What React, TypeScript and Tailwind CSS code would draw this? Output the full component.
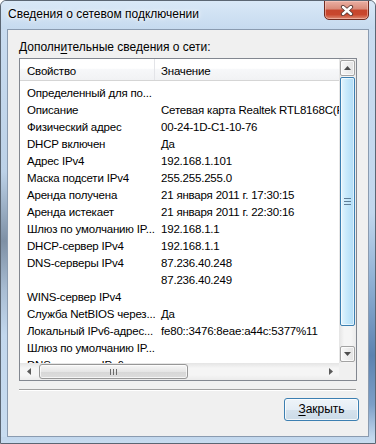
import React from "react";

const rows: [string, string][] = [
  ["Определенный для по...", ""],
  ["Описание", "Сетевая карта Realtek RTL8168C(P)/8111C(P) Family PCI-E Gigabit Ethernet NIC"],
  ["Физический адрес", "00-24-1D-C1-10-76"],
  ["DHCP включен", "Да"],
  ["Адрес IPv4", "192.168.1.101"],
  ["Маска подсети IPv4", "255.255.255.0"],
  ["Аренда получена", "21 января 2011 г. 17:30:15"],
  ["Аренда истекает", "21 января 2011 г. 22:30:16"],
  ["Шлюз по умолчанию IP...", "192.168.1.1"],
  ["DHCP-сервер IPv4", "192.168.1.1"],
  ["DNS-серверы IPv4", "87.236.40.248"],
  ["", "87.236.40.249"],
  ["WINS-сервер IPv4", ""],
  ["Служба NetBIOS через...", "Да"],
  ["Локальный IPv6-адрес...", "fe80::3476:8eae:a44c:5377%11"],
  ["Шлюз по умолчанию IP...", ""],
  ["DNS-серверы IPv6", ""],
];

function Arrow({ dir, color = "#4d4d4d" }: { dir: "up" | "down" | "left" | "right"; color?: string }) {
  const vertical = dir === "up" || dir === "down";
  const pts = {
    up: "0,4 7,4 3.5,0",
    down: "0,0 7,0 3.5,4",
    left: "4,0 4,7 0,3.5",
    right: "0,0 0,7 4,3.5",
  }[dir];
  return (
    <svg width={vertical ? 7 : 4} height={vertical ? 4 : 7} viewBox={vertical ? "0 0 7 4" : "0 0 4 7"}>
      <polygon points={pts} fill={color} />
    </svg>
  );
}

function CloseGlyph() {
  return (
    <svg width="14" height="11" viewBox="0 0 14 11">
      <path d="M3 2 L11 9 M11 2 L3 9" stroke="#5a3a36" strokeWidth="4.2" strokeLinecap="round" />
      <path d="M3 2 L11 9 M11 2 L3 9" stroke="#ffffff" strokeWidth="2.4" strokeLinecap="round" />
    </svg>
  );
}

function VScrollBar() {
  return (
    <div className="w-[17px] shrink-0 flex flex-col bg-[linear-gradient(to_right,#e4e4e4,#f5f5f5_30%,#f5f5f5_70%,#ebebeb)]">
      <div className="mx-px mt-px h-[16px] rounded-[2px] border border-[#a3a3a3] bg-[linear-gradient(to_right,#f8f8f8,#e2e2e2)] shadow-[inset_0_0_0_1px_rgba(255,255,255,0.7)] flex items-center justify-center">
        <Arrow dir="up" />
      </div>
      <div className="mx-px mt-px h-[249px] rounded-[2px] border border-[#3c7fb1] bg-[linear-gradient(to_right,#e5f5fd,#c9eafc_40%,#b0dcf6)] shadow-[inset_0_0_0_1px_rgba(255,255,255,0.6)] flex flex-col items-center justify-center gap-[2px]">
        <span className="block w-[7px] h-px bg-[#5f7e97]" />
        <span className="block w-[7px] h-px bg-[#5f7e97]" />
        <span className="block w-[7px] h-px bg-[#5f7e97]" />
      </div>
      <div className="flex-1" />
      <div className="mx-px mb-px h-[16px] rounded-[2px] border border-[#a3a3a3] bg-[linear-gradient(to_right,#f8f8f8,#e2e2e2)] shadow-[inset_0_0_0_1px_rgba(255,255,255,0.7)] flex items-center justify-center">
        <Arrow dir="down" />
      </div>
    </div>
  );
}

function HScrollBar() {
  return (
    <div className="flex-1 min-w-0 flex bg-[linear-gradient(to_bottom,#e4e4e4,#f5f5f5_30%,#f5f5f5_70%,#ebebeb)]">
      <div className="w-[17px] flex items-center justify-center">
        <Arrow dir="left" color="#5a5a5a" />
      </div>
      <div className="ml-[2px] my-px w-[149px] rounded-[3px] border border-[#979797] bg-[linear-gradient(to_bottom,#f6f6f6,#e6e6e6_50%,#d7d7d7_51%,#dcdcdc)] shadow-[inset_0_0_0_1px_rgba(255,255,255,0.7)] flex items-center justify-center gap-[2px]">
        <span className="block w-px h-[6px] bg-[#6a6a6a]" />
        <span className="block w-px h-[6px] bg-[#6a6a6a]" />
        <span className="block w-px h-[6px] bg-[#6a6a6a]" />
      </div>
      <div className="flex-1" />
      <div className="w-[17px] flex items-center justify-center">
        <Arrow dir="right" color="#5a5a5a" />
      </div>
    </div>
  );
}

function NetworkDetails() {
  return (
    <div className="mx-[11px] mt-[3px] h-[323px] shrink-0 border border-[#828790] bg-white flex flex-col">
      <div className="h-[304px] flex">
        <div className="flex-1 min-w-0 overflow-hidden text-[11.5px] tracking-[-0.2px]">
          <div className="h-[22px] flex border-b border-[#d5d5d5] bg-[linear-gradient(to_bottom,#ffffff,#ffffff_45%,#f7f8fa_46%,#f1f2f4)]">
            <div className="w-[135px] shrink-0 pl-[7px] pt-[5px] leading-[15px] border-r border-[#e3e4e8]">Свойство</div>
            <div className="pl-[6px] pt-[5px] leading-[15px] whitespace-nowrap">Значение</div>
          </div>
          <div className="pt-[4px]">
            {rows.map(([name, value], i) => (
              <div key={i} className="h-[17px] flex leading-[17px] whitespace-nowrap">
                <div className="w-[135px] shrink-0 pl-[7px] overflow-hidden">{name}</div>
                <div className="pl-[6px]">{value}</div>
              </div>
            ))}
          </div>
        </div>
        <VScrollBar />
      </div>
      <div className="h-[17px] flex">
        <HScrollBar />
        <div className="w-[17px] shrink-0 bg-[#f0f0f0]" />
      </div>
    </div>
  );
}

export default function App() {
  return (
    <div className="w-[376px] h-[444px] flex flex-col rounded-t-[6px] border border-[#5b6673] bg-[#c4d8ee] shadow-[inset_0_0_0_1px_rgba(255,255,255,0.55)] text-[12px] text-black font-['Liberation_Sans',Arial,sans-serif] overflow-hidden">
      <div className="h-[28px] shrink-0 flex items-start justify-between rounded-t-[5px] bg-[linear-gradient(to_bottom,#d9e8f7,#c6daef)]">
        <div className="pl-[7px] pt-[6px] leading-[15px] [text-shadow:0_0_6px_#fff,0_0_3px_#fff]">
          Сведения о сетевом подключении
        </div>
        <div className="-mt-px mr-[6px] w-[45px] h-[20px] rounded-b-[5px] border border-[#6f2b20] bg-[linear-gradient(to_bottom,#eab0a4,#d98a78_45%,#c6452d_50%,#c9472e_75%,#dd8a73)] shadow-[inset_0_0_0_1px_rgba(255,210,200,0.5)] flex items-center justify-center">
          <CloseGlyph />
        </div>
      </div>
      <div className="flex-1 min-h-0 flex">
        <div className="w-[6px] shrink-0 bg-[linear-gradient(to_bottom,#c9dcf0,#bcd1e7_35%,#7e90a5_52%,#a9bdd3_64%,#c2d7ed_75%,#c8dcf0)]" />
        <div className="flex-1 min-w-0 flex flex-col border border-[#8a9bb0] bg-[#f0f0f0]">
          <div className="pl-[11px] pt-[10px] leading-[15px]">
            Дополн<span className="underline underline-offset-[2px]">и</span>тельные сведения о сети:
          </div>
          <NetworkDetails />
          <div className="ml-[11px] mr-[12px] mt-[8px] h-[2px] shrink-0 border-t border-[#a0a0a0] border-b border-b-white" />
          <div className="mt-[7px] mr-[9px] flex justify-end">
            <button className="w-[75px] h-[23px] rounded-[3px] border border-[#3c7fb1] bg-[linear-gradient(to_bottom,#eef4f9,#e4edf5_50%,#d5e2ed_51%,#cbdbe8)] shadow-[inset_0_0_0_1px_rgba(255,255,255,0.75)] leading-[15px]">
              <span className="underline underline-offset-[2px]">З</span>акрыть
            </button>
          </div>
        </div>
        <div className="w-[6px] shrink-0 bg-[linear-gradient(to_bottom,#c9dcf0,#c2d7ed_45%,#8fb0d4_62%,#5d83b0_80%,#7c9fc7_92%,#c2d7ed)]" />
      </div>
      <div className="h-[6px] shrink-0 bg-[linear-gradient(to_bottom,#c2d7ed,#c8dcf0)]" />
    </div>
  );
}
